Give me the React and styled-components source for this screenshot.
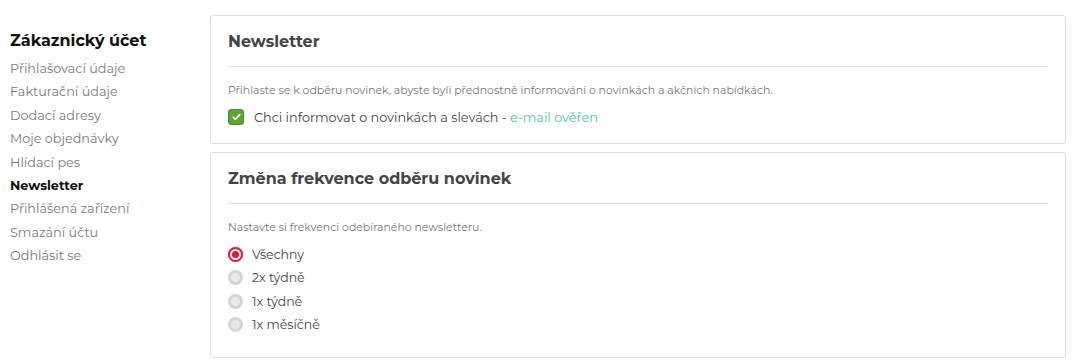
import React, { useState } from "react";
import styled, { createGlobalStyle } from "styled-components";

const Global = createGlobalStyle`
  html, body { margin: 0; padding: 0; background: #fff; }
  body { font-family: "Montserrat", "Open Sans", "DejaVu Sans", sans-serif; }
  * { box-sizing: border-box; }
`;

const Page = styled.div`
  display: flex;
  padding: 15px 9px 6px 10px;
  width: 1075px;
`;

const Sidebar = styled.nav`
  width: 200px;
  flex: none;
  padding-top: 15px;
`;

const SideTitle = styled.h2`
  margin: 0 0 5px;
  font-size: 16px;
  line-height: 22px;
  font-weight: 700;
  color: #111;
`;

const SideList = styled.ul`
  list-style: none;
  margin: 0;
  padding: 0;
`;

const SideItem = styled.li`
  font-size: 12.8px;
  line-height: 23.375px;
  color: ${(p) => (p.$active ? "#111" : "#7a7a7a")};
  font-weight: ${(p) => (p.$active ? 700 : 400)};
`;

const Main = styled.main`
  flex: 1;
  display: flex;
  flex-direction: column;
  gap: 8px;
`;

const Card = styled.section`
  border: 1px solid #dedede;
  border-radius: 3px;
  padding: 0 17px ${(p) => p.$pb}px;
`;

const CardHead = styled.h3`
  margin: 0;
  padding: 16px 0 14px;
  font-size: 16px;
  line-height: 20px;
  font-weight: 700;
  color: #444;
  border-bottom: 1px solid #dcdcdc;
`;

const Desc = styled.p`
  margin: 15px 0 0;
  font-size: 10.9px;
  line-height: 16px;
  color: #777;
`;

const CheckRow = styled.label`
  display: flex;
  align-items: center;
  gap: 10px;
  margin-top: 9px;
  height: 20px;
  font-size: 12.8px;
  color: #444;
`;

const CheckBox = styled.span`
  width: 16px;
  height: 16px;
  border-radius: 3px;
  background: #60a33a;
  border: 1px solid #4f8a2f;
  display: flex;
  align-items: center;
  justify-content: center;
`;

const Link = styled.span`
  color: #4ec3a6;
`;

const RadioList = styled.div`
  margin-top: 8px;
  display: flex;
  flex-direction: column;
`;

const RadioRow = styled.label`
  display: flex;
  align-items: center;
  gap: 9px;
  height: 23.3px;
  font-size: 12.5px;
  color: #444;
`;

const RadioDot = styled.span`
  width: 15px;
  height: 15px;
  border-radius: 50%;
  flex: none;
  ${(p) =>
    p.$on
      ? `background: #d8173c; box-shadow: inset 0 0 0 2px #d8173c, inset 0 0 0 4px #fff;`
      : `background: #e9e9e9; box-shadow: inset 0 0 0 3px #d6d6d6;`}
`;

const options = ["Všechny", "2x týdně", "1x týdně", "1x měsíčně"];
const menu = [
  "Přihlašovací údaje",
  "Fakturační údaje",
  "Dodací adresy",
  "Moje objednávky",
  "Hlídací pes",
  "Newsletter",
  "Přihlášená zařízení",
  "Smazání účtu",
  "Odhlásit se",
];

export default function App() {
  const [sel, setSel] = useState(0);
  return (
    <>
      <Global />
      <Page>
        <Sidebar>
          <SideTitle>Zákaznický účet</SideTitle>
          <SideList>
            {menu.map((m) => (
              <SideItem key={m} $active={m === "Newsletter"}>
                {m}
              </SideItem>
            ))}
          </SideList>
        </Sidebar>
        <Main>
          <Card $pb={16}>
            <CardHead>Newsletter</CardHead>
            <Desc>
              Přihlaste se k odběru novinek, abyste byli přednostně informováni o
              novinkách a akčních nabídkách.
            </Desc>
            <CheckRow>
              <CheckBox>
                <svg width="9" height="8" viewBox="0 0 9 8">
                  <path d="M1.2 4.2 L3.5 6.3 L7.8 1.6" fill="none" stroke="#fff" strokeWidth="1.7" strokeLinecap="round" strokeLinejoin="round" />
                </svg>
              </CheckBox>
              <span>
                Chci informovat o novinkách a slevách - <Link>e-mail ověřen</Link>
              </span>
            </CheckRow>
          </Card>
          <Card $pb={21}>
            <CardHead>Změna frekvence odběru novinek</CardHead>
            <Desc>Nastavte si frekvenci odebíraného newsletteru.</Desc>
            <RadioList>
              {options.map((o, i) => (
                <RadioRow key={o} onClick={() => setSel(i)}>
                  <RadioDot $on={sel === i} />
                  {o}
                </RadioRow>
              ))}
            </RadioList>
          </Card>
        </Main>
      </Page>
    </>
  );
}
